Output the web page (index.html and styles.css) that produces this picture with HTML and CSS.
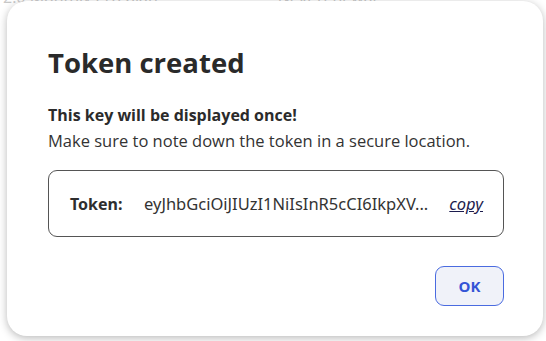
FILE: index.html
```html
<!DOCTYPE html>
<html>
<head>
<meta charset="utf-8">
<link rel="stylesheet" href="styles.css">
</head>
<body>
<div class="bg">
  <div class="bg-row"><span class="bg-a">2.0 Monthly Pro plan</span><span class="bg-b">Next renewal</span></div>
</div>
<div class="dialog">
  <h1 class="title">Token created</h1>
  <p class="warn">This key will be displayed once!</p>
  <p class="note">Make sure to note down the token in a secure location.</p>
  <div class="token-box">
    <span class="token-label">Token:</span>
    <span class="token-value">eyJhbGciOiJIUzI1NiIsInR5cCI6IkpXV...</span>
    <a class="copy" href="#">copy</a>
  </div>
  <div class="actions">
    <button class="ok">OK</button>
  </div>
</div>
</body>
</html>
```
FILE: styles.css
```css
html, body {
  margin: 0;
  padding: 0;
  background: #ffffff;
  width: 546px;
  height: 341px;
  overflow: hidden;
}
.bg {
  font-family: "Open Sans", sans-serif;
  color: #c8c8c8;
  font-size: 16px;
}
.bg-row {
  display: flex;
  gap: 120px;
  margin-top: -14px;
  padding-left: 3px;
}
.dialog {
  position: absolute;
  left: 7px;
  top: 1px;
  width: 536px;
  height: 335px;
  box-sizing: border-box;
  background: #fff;
  border-radius: 20px;
  box-shadow: 0 2px 8px rgba(0,0,0,0.28);
  padding: 41px 40px 0 41px;
  font-family: "Open Sans", sans-serif;
  color: #2b2b2b;
}
.title {
  margin: 0;
  font-size: 27.5px;
  font-weight: 700;
  line-height: 42px;
  color: #2a2a2a;
}
.warn {
  margin: 19px 0 0;
  font-size: 16px;
  font-weight: 700;
  line-height: 24px;
}
.note {
  margin: 3px 0 0;
  font-size: 16.5px;
  line-height: 22px;
  color: #333;
}
.token-box {
  margin-top: 18px;
  width: 456px;
  height: 67px;
  box-sizing: border-box;
  border: 1px solid #555;
  border-radius: 9px;
  display: flex;
  align-items: center;
  padding: 0 20px 0 21px;
  font-family: "Noto Sans", sans-serif;
  font-size: 16.5px;
}
.token-label {
  font-weight: 700;
  color: #2e2e2e;
  width: 74px;
  flex: none;
  font-size: 16px;
}
.token-value {
  flex: 1;
  white-space: nowrap;
  color: #333;
  margin-right: 19px;
}
.copy {
  font-style: italic;
  color: #1c1c4e;
  text-decoration: underline;
  font-size: 16.5px;
}
.actions {
  display: flex;
  justify-content: flex-end;
  margin-top: 29px;
  width: 456px;
}
.ok {
  width: 69px;
  height: 40px;
  border: 1px solid #4a6be0;
  border-radius: 9px;
  background: #f0f2f9;
  color: #3555d6;
  font-family: "Open Sans", sans-serif;
  font-weight: 700;
  font-size: 15px;
}
```
